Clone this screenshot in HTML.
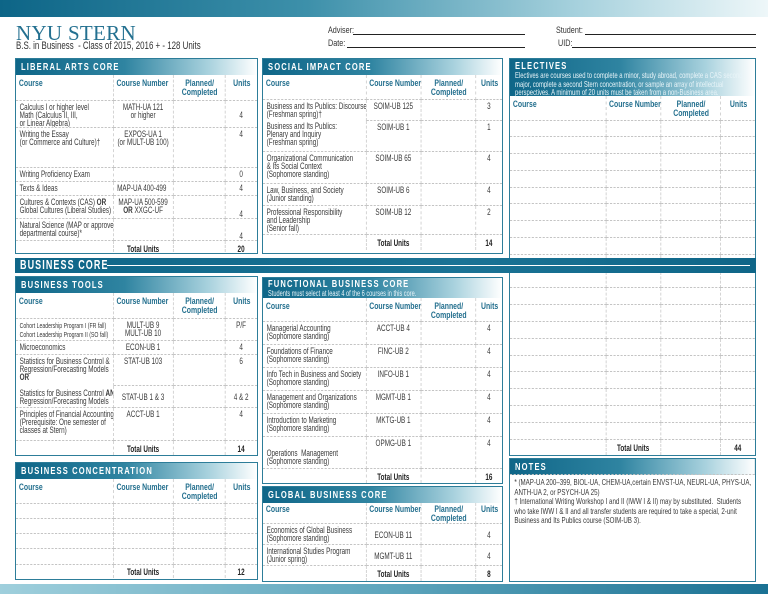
<!DOCTYPE html>
<html><head><meta charset="utf-8"><style>
*{margin:0;padding:0;box-sizing:border-box}
body{width:768px;height:594px;position:relative;background:#fff;overflow:hidden;font-family:"Liberation Sans",sans-serif;color:#333}
.a{position:absolute}
.box{position:absolute;border:1.5px solid #2d7d99;background:#fff;overflow:hidden}
.s{width:138.9%;transform:scaleX(.72);transform-origin:0 0}
.hd{height:16px;background:linear-gradient(90deg,#0f6688 0%,#2f84a1 45%,#a9d2de 80%,#fff 100%);color:#fff;font:bold 10.5px "Liberation Sans",sans-serif;letter-spacing:1.6px;padding-left:7px;line-height:16px;white-space:nowrap}
table{border-collapse:collapse;table-layout:fixed;width:100%}
td{border:1px dashed #c4c4c4;font-size:8.8px;line-height:8px;vertical-align:top;padding:2px 5px 0;color:#3a3a3a;overflow:hidden;white-space:nowrap}
tr td:first-child{border-left:none}
tr td:last-child{border-right:none}
tr:first-child td{border-top:none}
tr:last-child td{border-bottom:none}
tr.h td{color:#236f8e;font-weight:bold;font-size:9.6px;line-height:9px;padding-top:4px;padding-left:4px;padding-right:2px}
.c{text-align:center}
.m{vertical-align:middle}
.b{font-weight:bold;color:#222}
.lbl{font-size:9px;color:#333;transform:scaleX(.8);transform-origin:0 0}
.ln{position:absolute;height:1px;background:#222}
</style></head><body>
<div class="a" style="left:0;top:0;width:768px;height:17px;background:linear-gradient(90deg,#0d6587 0%,#3d90aa 40%,#a6d1dd 75%,#eef7f9 100%)"></div>
<div class="a" style="left:0;top:584px;width:768px;height:10px;background:linear-gradient(90deg,#9fcfdc 0%,#5ea6bd 50%,#1a7193 100%)"></div>

<div class="a" style="left:16px;top:21px;font:21px 'Liberation Serif',serif;color:#237090;letter-spacing:.3px">NYU STERN</div>
<div class="a" style="left:16px;top:40px;font-size:11px;color:#333;white-space:nowrap;transform:scaleX(.72);transform-origin:0 0">B.S. in Business &nbsp;- Class of 2015, 2016 + - 128 Units</div>

<div class="a lbl" style="left:328px;top:25px">Adviser:</div><div class="ln" style="left:353px;top:34px;width:172px"></div>
<div class="a lbl" style="left:328px;top:38px">Date:</div><div class="ln" style="left:347px;top:47px;width:178px"></div>
<div class="a lbl" style="left:556px;top:25px">Student:</div><div class="ln" style="left:585px;top:34px;width:171px"></div>
<div class="a lbl" style="left:558px;top:38px">UID:</div><div class="ln" style="left:572px;top:47px;width:184px"></div>

<!-- LIBERAL ARTS -->
<div class="box" style="left:15px;top:58px;width:243px;height:196px"><div class="s">
<div class="hd">LIBERAL ARTS CORE</div>
<table><colgroup><col style="width:135px"><col style="width:83px"><col style="width:72px"><col></colgroup>
<tr class="h" style="height:25px"><td>Course</td><td>Course Number</td><td class="c">Planned/<br>Completed</td><td class="c">Units</td></tr>
<tr style="height:24px"><td>Calculus I or higher level<br>Math (Calculus II, III,<br>or Linear Algebra)</td><td class="c">MATH-UA 121<br>or higher</td><td></td><td class="c m">4</td></tr>
<tr style="height:40px"><td>Writing the Essay<br>(or Commerce and Culture)†</td><td class="c">EXPOS-UA 1<br>(or MULT-UB 100)</td><td></td><td class="c">4</td></tr>
<tr style="height:14px"><td>Writing Proficiency Exam</td><td></td><td></td><td class="c">0</td></tr>
<tr style="height:14px"><td>Texts &amp; Ideas</td><td>MAP-UA 400-499</td><td></td><td class="c">4</td></tr>
<tr style="height:23px"><td>Cultures &amp; Contexts (CAS) <b>OR</b><br>Global Cultures (Liberal Studies)</td><td class="c">MAP-UA 500-599<br><b>OR</b> XXGC-UF</td><td></td><td class="c" style="vertical-align:bottom">4</td></tr>
<tr style="height:22px"><td>Natural Science (MAP or approved<br>departmental course)*</td><td></td><td></td><td class="c" style="vertical-align:bottom">4</td></tr>
<tr style="height:16px"><td></td><td class="c b m">Total Units</td><td></td><td class="c b m">20</td></tr>
</table></div></div>

<!-- SOCIAL IMPACT -->
<div class="box" style="left:262px;top:58px;width:241px;height:196px"><div class="s">
<div class="hd">SOCIAL IMPACT CORE</div>
<table><colgroup><col style="width:143px"><col style="width:76px"><col style="width:76px"><col></colgroup>
<tr class="h" style="height:24px"><td>Course</td><td>Course Number</td><td class="c">Planned/<br>Completed</td><td class="c">Units</td></tr>
<tr style="height:21px"><td style="border-bottom:none">Business and Its Publics: Discourse<br>(Freshman spring)†</td><td class="c">SOIM-UB 125</td><td></td><td class="c">3</td></tr>
<tr style="height:31px"><td style="border-top:none">Business and Its Publics:<br>Plenary and Inquiry<br>(Freshman spring)</td><td class="c">SOIM-UB 1</td><td></td><td class="c">1</td></tr>
<tr style="height:32px"><td>Organizational Communication<br>&amp; Its Social Context<br>(Sophomore standing)</td><td class="c">SOIM-UB 65</td><td></td><td class="c">4</td></tr>
<tr style="height:22px"><td>Law, Business, and Society<br>(Junior standing)</td><td class="c">SOIM-UB 6</td><td></td><td class="c">4</td></tr>
<tr style="height:29px"><td>Professional Responsibility<br>and Leadership<br>(Senior fall)</td><td class="c">SOIM-UB 12</td><td></td><td class="c">2</td></tr>
<tr style="height:16px"><td></td><td class="c b m">Total Units</td><td></td><td class="c b m">14</td></tr>
</table></div></div>

<!-- ELECTIVES -->
<div class="box" style="left:509px;top:58px;width:247px;height:398px"><div class="s">
<div style="height:37px;background:linear-gradient(90deg,#0f6688 0%,#2f84a1 45%,#a9d2de 80%,#fff 100%);padding:1px 7px;color:#fff;white-space:nowrap">
<div style="font:bold 10.5px 'Liberation Sans',sans-serif;letter-spacing:1.6px">ELECTIVES</div>
<div style="font-size:8.2px;line-height:8.7px;color:#e8f4f8">Electives are courses used to complete a minor, study abroad, complete a CAS second<br>major, complete a second Stern concentration, or sample an array of intellectual<br>perspectives. A minimum of 20 units must be taken from a non-Business area.</div></div>
<table><colgroup><col style="width:133px"><col style="width:76px"><col style="width:83px"><col></colgroup>
<tr class="h" style="height:24px"><td>Course</td><td>Course Number</td><td class="c">Planned/<br>Completed</td><td class="c">Units</td></tr>
<tr style="height:16.8px"><td></td><td></td><td></td><td></td></tr><tr style="height:16.8px"><td></td><td></td><td></td><td></td></tr><tr style="height:16.8px"><td></td><td></td><td></td><td></td></tr><tr style="height:16.8px"><td></td><td></td><td></td><td></td></tr><tr style="height:16.8px"><td></td><td></td><td></td><td></td></tr>
<tr style="height:16.8px"><td></td><td></td><td></td><td></td></tr><tr style="height:16.8px"><td></td><td></td><td></td><td></td></tr><tr style="height:16.8px"><td></td><td></td><td></td><td></td></tr><tr style="height:16.8px"><td></td><td></td><td></td><td></td></tr><tr style="height:16.8px"><td></td><td></td><td></td><td></td></tr>
<tr style="height:16.8px"><td></td><td></td><td></td><td></td></tr><tr style="height:16.8px"><td></td><td></td><td></td><td></td></tr><tr style="height:16.8px"><td></td><td></td><td></td><td></td></tr><tr style="height:16.8px"><td></td><td></td><td></td><td></td></tr><tr style="height:16.8px"><td></td><td></td><td></td><td></td></tr>
<tr style="height:16.8px"><td></td><td></td><td></td><td></td></tr><tr style="height:16.8px"><td></td><td></td><td></td><td></td></tr><tr style="height:16.8px"><td></td><td></td><td></td><td></td></tr><tr style="height:16.8px"><td></td><td></td><td></td><td></td></tr>
<tr style="height:16px"><td></td><td class="c b m">Total Units</td><td></td><td class="c b m">44</td></tr>
</table></div></div>

<!-- BUSINESS CORE banner -->
<div class="a" style="left:15px;top:258px;width:741px;height:15px;background:linear-gradient(90deg,#0f6688,#1a7395 60%,#0f6688)"></div>
<div class="a" style="left:20px;top:258px;font:bold 12.5px 'Liberation Sans',sans-serif;color:#fff;letter-spacing:1.5px;line-height:15px;white-space:nowrap;transform:scaleX(.72);transform-origin:0 0">BUSINESS CORE</div>
<div class="a" style="left:107px;top:265px;width:643px;height:1px;background:#fff"></div>

<!-- BUSINESS TOOLS -->
<div class="box" style="left:15px;top:276px;width:243px;height:180px"><div class="s">
<div class="hd">BUSINESS TOOLS</div>
<table><colgroup><col style="width:135px"><col style="width:83px"><col style="width:72px"><col></colgroup>
<tr class="h" style="height:25px"><td>Course</td><td>Course Number</td><td class="c">Planned/<br>Completed</td><td class="c">Units</td></tr>
<tr style="height:22px"><td style="font-size:7.2px;line-height:9px">Cohort Leadership Program I (FR fall)<br>Cohort Leadership Program II (SO fall)</td><td class="c">MULT-UB 9<br>MULT-UB 10</td><td></td><td class="c">P/F</td></tr>
<tr style="height:14px"><td>Microeconomics</td><td class="c">ECON-UB 1</td><td></td><td class="c">4</td></tr>
<tr style="height:31px"><td style="border-bottom:none">Statistics for Business Control &amp;<br>Regression/Forecasting Models<br><b>OR</b></td><td class="c">STAT-UB 103</td><td></td><td class="c">6</td></tr>
<tr style="height:22px"><td style="border-top:none;vertical-align:bottom;padding-bottom:2px">Statistics for Business Control <b>AND</b><br>Regression/Forecasting Models</td><td class="c m">STAT-UB 1 &amp; 3</td><td></td><td class="c m">4 &amp; 2</td></tr>
<tr style="height:33px"><td>Principles of Financial Accounting<br>(Prerequisite: One semester of<br>classes at Stern)</td><td class="c">ACCT-UB 1</td><td></td><td class="c">4</td></tr>
<tr style="height:15px"><td></td><td class="c b m">Total Units</td><td></td><td class="c b m">14</td></tr>
</table></div></div>

<!-- BUSINESS CONCENTRATION -->
<div class="box" style="left:15px;top:462px;width:243px;height:118px"><div class="s">
<div class="hd">BUSINESS CONCENTRATION</div>
<table><colgroup><col style="width:135px"><col style="width:83px"><col style="width:72px"><col></colgroup>
<tr class="h" style="height:24px"><td>Course</td><td>Course Number</td><td class="c">Planned/<br>Completed</td><td class="c">Units</td></tr>
<tr style="height:15px"><td></td><td></td><td></td><td></td></tr>
<tr style="height:15px"><td></td><td></td><td></td><td></td></tr>
<tr style="height:15px"><td></td><td></td><td></td><td></td></tr>
<tr style="height:16px"><td></td><td></td><td></td><td></td></tr>
<tr style="height:14px"><td></td><td class="c b m">Total Units</td><td></td><td class="c b m">12</td></tr>
</table></div></div>

<!-- FUNCTIONAL -->
<div class="box" style="left:262px;top:277px;width:241px;height:207px"><div class="s">
<div style="height:20px;background:linear-gradient(90deg,#0f6688 0%,#2f84a1 45%,#a9d2de 80%,#fff 100%);padding:0 7px;color:#fff;white-space:nowrap">
<div style="font:bold 10.5px 'Liberation Sans',sans-serif;letter-spacing:1.6px;line-height:12px">FUNCTIONAL BUSINESS CORE</div>
<div style="font-size:7.8px;line-height:7px;color:#e8f4f8">Students must select at least 4 of the 6 courses in this core.</div></div>
<table><colgroup><col style="width:143px"><col style="width:76px"><col style="width:76px"><col></colgroup>
<tr class="h" style="height:23px"><td>Course</td><td>Course Number</td><td class="c">Planned/<br>Completed</td><td class="c">Units</td></tr>
<tr style="height:23px"><td>Managerial Accounting<br>(Sophomore standing)</td><td class="c">ACCT-UB 4</td><td></td><td class="c">4</td></tr>
<tr style="height:23px"><td>Foundations of Finance<br>(Sophomore standing)</td><td class="c">FINC-UB 2</td><td></td><td class="c">4</td></tr>
<tr style="height:23px"><td>Info Tech in Business and Society<br>(Sophomore standing)</td><td class="c">INFO-UB 1</td><td></td><td class="c">4</td></tr>
<tr style="height:23px"><td>Management and Organizations<br>(Sophomore standing)</td><td class="c">MGMT-UB 1</td><td></td><td class="c">4</td></tr>
<tr style="height:23px"><td>Introduction to Marketing<br>(Sophomore standing)</td><td class="c">MKTG-UB 1</td><td></td><td class="c">4</td></tr>
<tr style="height:32px"><td style="vertical-align:bottom;padding-bottom:3px">Operations &nbsp;Management<br>(Sophomore standing)</td><td class="c">OPMG-UB 1</td><td></td><td class="c">4</td></tr>
<tr style="height:15px"><td></td><td class="c b m">Total Units</td><td></td><td class="c b m">16</td></tr>
</table></div></div>

<!-- GLOBAL -->
<div class="box" style="left:262px;top:486px;width:241px;height:96px"><div class="s">
<div class="hd">GLOBAL BUSINESS CORE</div>
<table><colgroup><col style="width:143px"><col style="width:76px"><col style="width:76px"><col></colgroup>
<tr class="h" style="height:20px"><td style="padding-top:2px">Course</td><td style="padding-top:2px">Course Number</td><td class="c" style="padding-top:2px">Planned/<br>Completed</td><td class="c" style="padding-top:2px">Units</td></tr>
<tr style="height:21px"><td style="vertical-align:bottom;padding-bottom:2px">Economics of Global Business<br>(Sophomore standing)</td><td class="c m">ECON-UB 11</td><td></td><td class="c m">4</td></tr>
<tr style="height:21px"><td style="vertical-align:bottom;padding-bottom:2px">International Studies Program<br>(Junior spring)</td><td class="c m">MGMT-UB 11</td><td></td><td class="c m">4</td></tr>
<tr style="height:15px"><td></td><td class="c b m">Total Units</td><td></td><td class="c b m">8</td></tr>
</table></div></div>

<!-- NOTES -->
<div class="box" style="left:509px;top:458px;width:247px;height:124px"><div class="s">
<div class="hd" style="border-bottom:1px dashed #c4c4c4">NOTES</div>
<div style="padding:3px 6px;font-size:8.6px;line-height:9.6px;color:#3a3a3a;white-space:nowrap">* (MAP-UA 200–399, BIOL-UA, CHEM-UA,certain ENVST-UA, NEURL-UA, PHYS-UA,<br>ANTH-UA 2, or PSYCH-UA 25)<br>† International Writing Workshop I and II (IWW I &amp; II) may by substituted. &nbsp;Students<br>who take IWW I &amp; II and all transfer students are required to take a special, 2-unit<br>Business and Its Publics course (SOIM-UB 3).</div>
</div></div>
</body></html>
